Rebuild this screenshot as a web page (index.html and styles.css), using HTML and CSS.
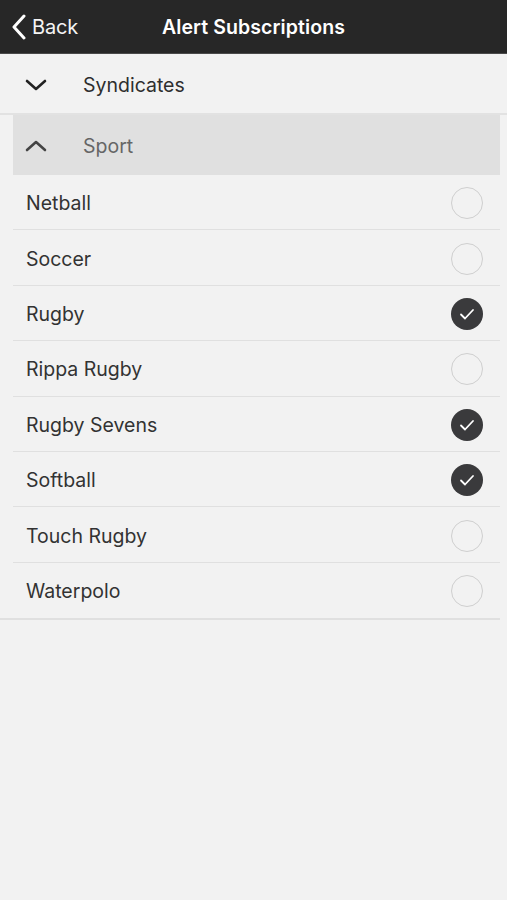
FILE: index.html
```html
<!DOCTYPE html>
<html>
<head>
<meta charset="utf-8">
<link rel="stylesheet" href="styles.css">
</head>
<body>
<header class="nav">
  <div class="back">
    <svg class="back-icon" width="16" height="26" viewBox="0 0 16 26"><path d="M13 2 L3 13 L13 24" fill="none" stroke="#fff" stroke-width="3" stroke-linecap="round" stroke-linejoin="round"/></svg>
    <span>Back</span>
  </div>
  <div class="title">Alert Subscriptions</div>
</header>
<div class="section">
  <svg class="chev" width="22" height="14" viewBox="0 0 22 14"><path d="M2 3 L11 11 L20 3" fill="none" stroke="#222" stroke-width="2.6" stroke-linecap="round" stroke-linejoin="round"/></svg>
  <span class="section-label">Syndicates</span>
</div>
<div class="group">
  <div class="group-head">
    <svg class="chev" width="22" height="14" viewBox="0 0 22 14"><path d="M2 11 L11 3 L20 11" fill="none" stroke="#444" stroke-width="2.6" stroke-linecap="round" stroke-linejoin="round"/></svg>
    <span class="group-label">Sport</span>
  </div>
  <div class="row"><span>Netball</span><span class="radio"></span></div>
  <div class="row"><span>Soccer</span><span class="radio"></span></div>
  <div class="row"><span>Rugby</span><span class="radio on"><svg width="32" height="32" viewBox="0 0 32 32"><path d="M10 16.5 L14 20.5 L22 12" fill="none" stroke="#fff" stroke-width="1.8" stroke-linecap="round" stroke-linejoin="round"/></svg></span></div>
  <div class="row"><span>Rippa Rugby</span><span class="radio"></span></div>
  <div class="row"><span>Rugby Sevens</span><span class="radio on"><svg width="32" height="32" viewBox="0 0 32 32"><path d="M10 16.5 L14 20.5 L22 12" fill="none" stroke="#fff" stroke-width="1.8" stroke-linecap="round" stroke-linejoin="round"/></svg></span></div>
  <div class="row"><span>Softball</span><span class="radio on"><svg width="32" height="32" viewBox="0 0 32 32"><path d="M10 16.5 L14 20.5 L22 12" fill="none" stroke="#fff" stroke-width="1.8" stroke-linecap="round" stroke-linejoin="round"/></svg></span></div>
  <div class="row"><span>Touch Rugby</span><span class="radio"></span></div>
  <div class="row last"><span>Waterpolo</span><span class="radio"></span></div>
</div>
<div class="list-end"></div>
</body>
</html>
```
FILE: styles.css
```css
html, body {
  margin: 0;
  padding: 0;
  background: #f2f2f2;
  font-family: Inter, "Liberation Sans", sans-serif;
}
.nav {
  height: 53px;
  background: #272727;
  border-bottom: 1px solid #4a4a4a;
  display: flex;
  align-items: center;
  position: relative;
  color: #fff;
}
.back {
  display: flex;
  align-items: center;
  padding-left: 11px;
  padding-top: 1px;
  gap: 5px;
  font-size: 20px;
  color: #f4f4f4;
}
.back span { letter-spacing: -0.2px; }
.title {
  position: absolute;
  left: 0;
  right: 0;
  top: 0;
  bottom: 0;
  display: flex;
  align-items: center;
  justify-content: center;
  padding-top: 1px;
  font-size: 19.5px;
  font-weight: 600;
  letter-spacing: 0.1px;
  pointer-events: none;
}
.section {
  box-sizing: border-box;
  height: 59px;
  display: flex;
  align-items: center;
  border-bottom: 2px solid #e2e2e2;
  padding-left: 25px;
  padding-top: 2px;
  box-sizing: content-box;
}
.section { height: 57px; }
.chev { flex: none; }
.section-label {
  margin-left: 36px;
  font-size: 19.5px;
  color: #2e2e2e;
}
.group {
  margin-left: 13px;
  margin-right: 7px;
}
.group-head {
  box-sizing: border-box;
  height: 60px;
  background: #e0e0e0;
  display: flex;
  align-items: center;
  padding-left: 12px;
  padding-top: 2px;
}
.group-label {
  margin-left: 36px;
  font-size: 19.5px;
  color: #666;
}
.row {
  box-sizing: border-box;
  height: 55.4px;
  display: flex;
  align-items: center;
  justify-content: space-between;
  padding-left: 13px;
  padding-right: 17px;
  padding-top: 2px;
  border-bottom: 1px solid #e0e0e0;
  font-size: 19.5px;
  color: #333;
}
.row.last { border-bottom: none; }
.radio {
  box-sizing: border-box;
  width: 32px;
  height: 32px;
  border-radius: 50%;
  border: 1.5px solid #cfcfcf;
  display: block;
}
.radio.on {
  background: #3a3a3c;
  border: none;
}
.radio svg { display: block; }
.list-end {
  width: 500px;
  border-top: 2px solid #e0e0e0;
}
```
